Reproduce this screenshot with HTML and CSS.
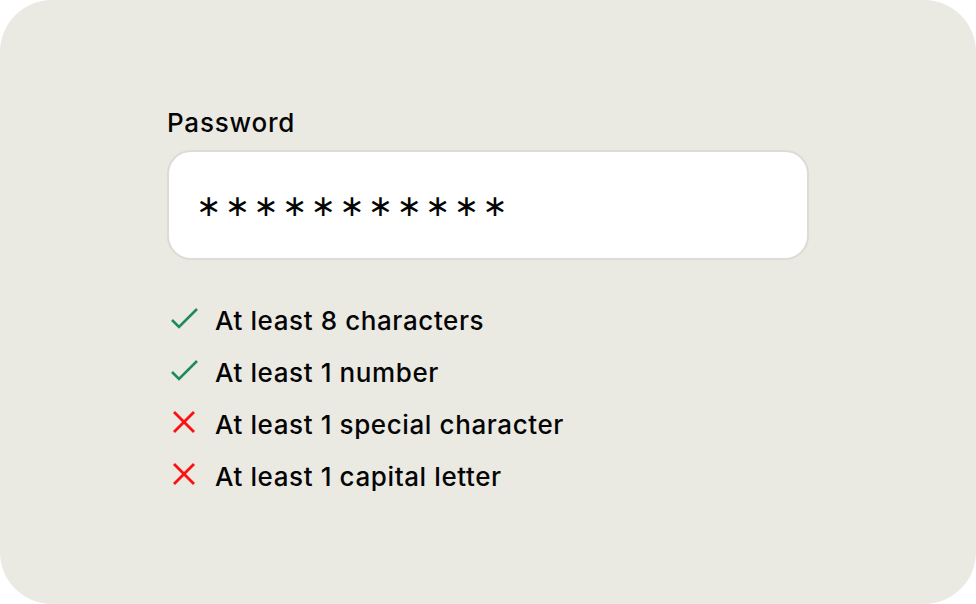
FILE: index.html
```html
<!DOCTYPE html>
<html lang="en">
<head>
    <meta charset="UTF-8">
    <meta name="viewport" content="width=device-width, initial-scale=1.0">
    <title>Password</title>
    <link rel="stylesheet" href="styles.css">
</head>
<body>
    <div class="card">
        <div class="field">
            <label class="label" for="password">Password</label>
            <div class="input" id="password">∗∗∗∗∗∗∗∗∗∗∗</div>

            <ul class="rules">
                <li class="rule rule-ok">
                    <svg class="icon" viewBox="0 0 28 28"><path d="M2 14 L9 21 L27 3" /></svg>
                    <span>At least 8 characters</span>
                </li>
                <li class="rule rule-ok">
                    <svg class="icon" viewBox="0 0 28 28"><path d="M2 14 L9 21 L27 3" /></svg>
                    <span>At least 1 number</span>
                </li>
                <li class="rule rule-fail">
                    <svg class="icon" viewBox="0 0 28 28"><path d="M4 2 L24 22 M24 2 L4 22" /></svg>
                    <span>At least 1 special character</span>
                </li>
                <li class="rule rule-fail">
                    <svg class="icon" viewBox="0 0 28 28"><path d="M4 2 L24 22 M24 2 L4 22" /></svg>
                    <span>At least 1 capital letter</span>
                </li>
            </ul>
        </div>
    </div>
</body>
</html>
```

FILE: styles.css
```css
* {
    margin: 0;
    padding: 0;
    box-sizing: border-box;
}

body {
    background: #fff;
    font-family: 'Inter', 'Noto Sans', sans-serif;
    color: #050505;
}

.card {
    width: 976px;
    height: 604px;
    background: #eaeae3;
    border-radius: 52px;
    padding: 106px 167px 0 167px;
}

.label {
    display: block;
    font-size: 26px;
    font-weight: 500;
    letter-spacing: 0.8px;
    line-height: 34px;
    margin-bottom: 10px;
}

.input {
    height: 110px;
    background: #fff;
    border: 2px solid #dcdcd5;
    border-radius: 24px;
    padding-left: 27px;
    display: flex;
    align-items: center;
    font-family: 'DejaVu Sans', sans-serif;
    font-size: 30px;
    letter-spacing: 3.5px;
}

.rules {
    list-style: none;
    margin-top: 34px;
}

.rule {
    height: 52px;
    display: flex;
    align-items: center;
    gap: 17px;
    font-size: 26px;
    font-weight: 450;
    letter-spacing: 0.6px;
}

.icon {
    flex-shrink: 0;
    width: 31px;
    height: 28px;
    padding-left: 3px;
    fill: none;
    stroke-width: 2.6;
}

.rule-ok .icon {
    stroke: #1e8a5c;
}

.rule-fail .icon {
    stroke: #ff1010;
    stroke-width: 2.8;
}
```
